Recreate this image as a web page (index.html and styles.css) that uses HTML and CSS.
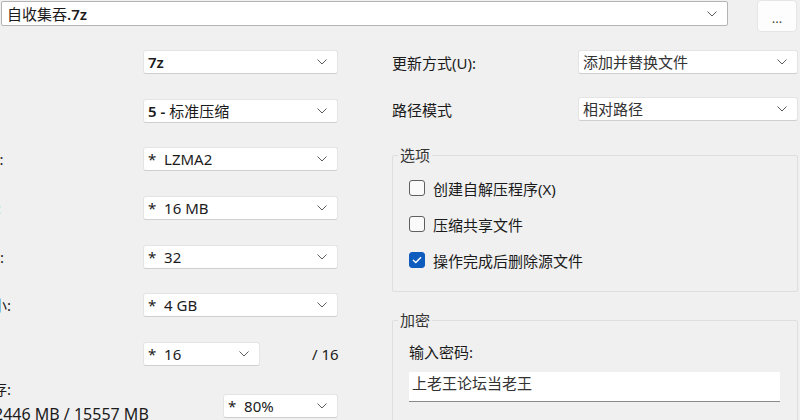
FILE: index.html
```html
<!DOCTYPE html>
<html lang="zh-CN">
<head>
    <meta charset="UTF-8">
    <title>添加到压缩包</title>
    <link rel="stylesheet" href="styles.css">
</head>
<body>
    <div class="top">
        <div class="combo path">
            <span>自收集吞<b>.7z</b></span>
            <svg class="chev" width="10" height="6" viewBox="0 0 10 6"><polyline points="0.5,0.5 5,5 9.5,0.5"/></svg>
        </div>
        <button class="browse">...</button>
    </div>

    <div class="main">
        <div class="left">
            <div class="row">
                <span class="label">压缩格式(F):</span>
                <div class="combo w-full"><span><b>7z</b></span><svg class="chev" width="10" height="6" viewBox="0 0 10 6"><polyline points="0.5,0.5 5,5 9.5,0.5"/></svg></div>
            </div>
            <div class="row">
                <span class="label">压缩等级(L):</span>
                <div class="combo w-full"><span><b>5 -</b> 标准压缩</span><svg class="chev" width="10" height="6" viewBox="0 0 10 6"><polyline points="0.5,0.5 5,5 9.5,0.5"/></svg></div>
            </div>
            <div class="row">
                <span class="label">压缩方法(M):</span>
                <div class="combo w-full"><span class="pre">*  LZMA2</span><svg class="chev" width="10" height="6" viewBox="0 0 10 6"><polyline points="0.5,0.5 5,5 9.5,0.5"/></svg></div>
            </div>
            <div class="row">
                <span class="label link">字典大小(D):</span>
                <div class="combo w-full"><span class="pre">*  16 MB</span><svg class="chev" width="10" height="6" viewBox="0 0 10 6"><polyline points="0.5,0.5 5,5 9.5,0.5"/></svg></div>
            </div>
            <div class="row">
                <span class="label">单词大小(W):</span>
                <div class="combo w-full"><span class="pre">*  32</span><svg class="chev" width="10" height="6" viewBox="0 0 10 6"><polyline points="0.5,0.5 5,5 9.5,0.5"/></svg></div>
            </div>
            <div class="row">
                <span class="label">固实数据大小:</span>
                <div class="combo w-full"><span class="pre">*  4 GB</span><svg class="chev" width="10" height="6" viewBox="0 0 10 6"><polyline points="0.5,0.5 5,5 9.5,0.5"/></svg></div>
            </div>
            <div class="row">
                <span class="label link">CPU 线程数:</span>
                <div class="combo w-short"><span class="pre">*  16</span><svg class="chev" width="10" height="6" viewBox="0 0 10 6"><polyline points="0.5,0.5 5,5 9.5,0.5"/></svg></div>
                <span class="threads">/ 16</span>
            </div>
            <div class="mem-row">
                <div class="mem-text">
                    <div class="label">压缩所用内存:</div>
                    <div class="mem-value">2446 MB / 15557 MB</div>
                </div>
                <div class="combo w-mem"><span class="pre">*  80%</span><svg class="chev" width="10" height="6" viewBox="0 0 10 6"><polyline points="0.5,0.5 5,5 9.5,0.5"/></svg></div>
            </div>
        </div>

        <div class="right">
            <div class="row">
                <span class="rlabel">更新方式(U):</span>
                <div class="combo w-right"><span>添加并替换文件</span><svg class="chev" width="10" height="6" viewBox="0 0 10 6"><polyline points="0.5,0.5 5,5 9.5,0.5"/></svg></div>
            </div>
            <div class="row second">
                <span class="rlabel">路径模式</span>
                <div class="combo w-right"><span>相对路径</span><svg class="chev" width="10" height="6" viewBox="0 0 10 6"><polyline points="0.5,0.5 5,5 9.5,0.5"/></svg></div>
            </div>

            <fieldset class="group options">
                <legend>选项</legend>
                <div class="check">
                    <span class="box"></span>
                    <span>创建自解压程序(X)</span>
                </div>
                <div class="check">
                    <span class="box"></span>
                    <span>压缩共享文件</span>
                </div>
                <div class="check">
                    <span class="box checked">
                        <svg width="10" height="8" viewBox="0 0 10 8"><polyline points="1,4 3.8,6.6 9,1.2"/></svg>
                    </span>
                    <span>操作完成后删除源文件</span>
                </div>
            </fieldset>

            <fieldset class="group crypt">
                <legend>加密</legend>
                <div class="pw-label">输入密码:</div>
                <div class="pw-input">上老王论坛当老王</div>
            </fieldset>
        </div>
    </div>
</body>
</html>
```

FILE: styles.css
```css
body {
    margin: 0;
    width: 800px;
    height: 420px;
    overflow: hidden;
    background: #f0f0f0;
    color: #1b1b1b;
    font-family: "Noto Sans", "Noto Sans CJK SC", sans-serif;
    font-size: 15px;
}

.top {
    display: flex;
    align-items: flex-start;
}

.combo {
    display: flex;
    align-items: center;
    justify-content: space-between;
    box-sizing: border-box;
    height: 24px;
    padding: 0 10px 0 4px;
    background: #fff;
    border: 1px solid #e4e4e4;
    border-bottom-color: #cfcfcf;
    border-radius: 3px;
    line-height: 20px;
    white-space: nowrap;
}

.combo b {
    font-weight: 600;
}

.pre {
    white-space: pre;
}

.chev {
    flex: none;
}

.chev polyline {
    fill: none;
    stroke: #5c5c5c;
    stroke-width: 1;
}

.path {
    width: 727px;
    height: 25px;
    margin: 1px 0 0 1px;
    border-color: #b4b4b4;
    border-radius: 2px;
    padding-left: 5px;
}

.browse {
    width: 40px;
    height: 32px;
    margin-left: 29px;
    background: #fdfdfd;
    border: 1px solid #e6e6e6;
    border-radius: 4px;
    color: #444;
    font-family: inherit;
    font-size: 13px;
    padding: 4px 0 0;
}

.main {
    display: flex;
    padding-top: 18px;
}

.left {
    flex: none;
    width: 421px;
    margin-left: -83px;
    display: flex;
    flex-direction: column;
}

.row {
    display: flex;
    align-items: center;
    height: 24px;
}

.left .row + .row {
    margin-top: 24.67px;
}

.label {
    flex: none;
    width: 226px;
    white-space: nowrap;
    line-height: 20px;
}

.link {
    color: #3b73b3;
}

.w-full {
    width: 195px;
}

.w-short {
    flex: none;
    width: 117px;
}

.threads {
    flex: none;
    margin-left: 52px;
    white-space: nowrap;
}

.mem-row {
    display: flex;
    align-items: flex-start;
    margin-top: 13px;
}

.mem-text {
    flex: none;
    width: 306px;
}

.mem-value {
    margin-left: 77px;
    font-size: 16px;
    line-height: 30px;
    white-space: nowrap;
}

.w-mem {
    width: 115px;
    margin-top: 15px;
}

.right {
    flex: none;
    width: 406px;
    margin-left: 54px;
    display: flex;
    flex-direction: column;
}

.rlabel {
    flex: none;
    width: 186px;
}

.w-right {
    width: 220px;
    color: #333;
}

.row.second {
    margin-top: 23px;
}

.group {
    margin: 0;
    padding: 0 0 0 16px;
    border: 1px solid #dedede;
    border-radius: 2px;
    min-width: 0;
}

.group legend {
    margin-left: -11px;
    padding: 0 2px;
    line-height: 18px;
    color: #333;
}

.options {
    margin-top: 25px;
    padding-top: 12px;
    padding-bottom: 19px;
    display: flex;
    flex-direction: column;
    gap: 12px;
}

.check {
    display: flex;
    align-items: center;
    gap: 8px;
    height: 24px;
}

.box {
    box-sizing: border-box;
    width: 16px;
    height: 16px;
    border: 1px solid #5f5f5f;
    border-radius: 3px;
    background: #fafafa;
    display: flex;
    align-items: center;
    justify-content: center;
}

.box.checked {
    background: #0f5cbf;
    border-color: #0f5cbf;
}

.box svg polyline {
    fill: none;
    stroke: #fff;
    stroke-width: 1.4;
}

.crypt {
    margin-top: 19px;
    height: 200px;
    padding-right: 0;
}

.pw-label {
    margin-top: 14px;
    line-height: 18px;
}

.pw-input {
    box-sizing: border-box;
    width: 371px;
    height: 30px;
    margin-top: 11px;
    padding: 1px 0 0 3px;
    background: #fff;
    border-bottom: 1px solid #8a8a8a;
    color: #333;
    line-height: 20px;
}
```
